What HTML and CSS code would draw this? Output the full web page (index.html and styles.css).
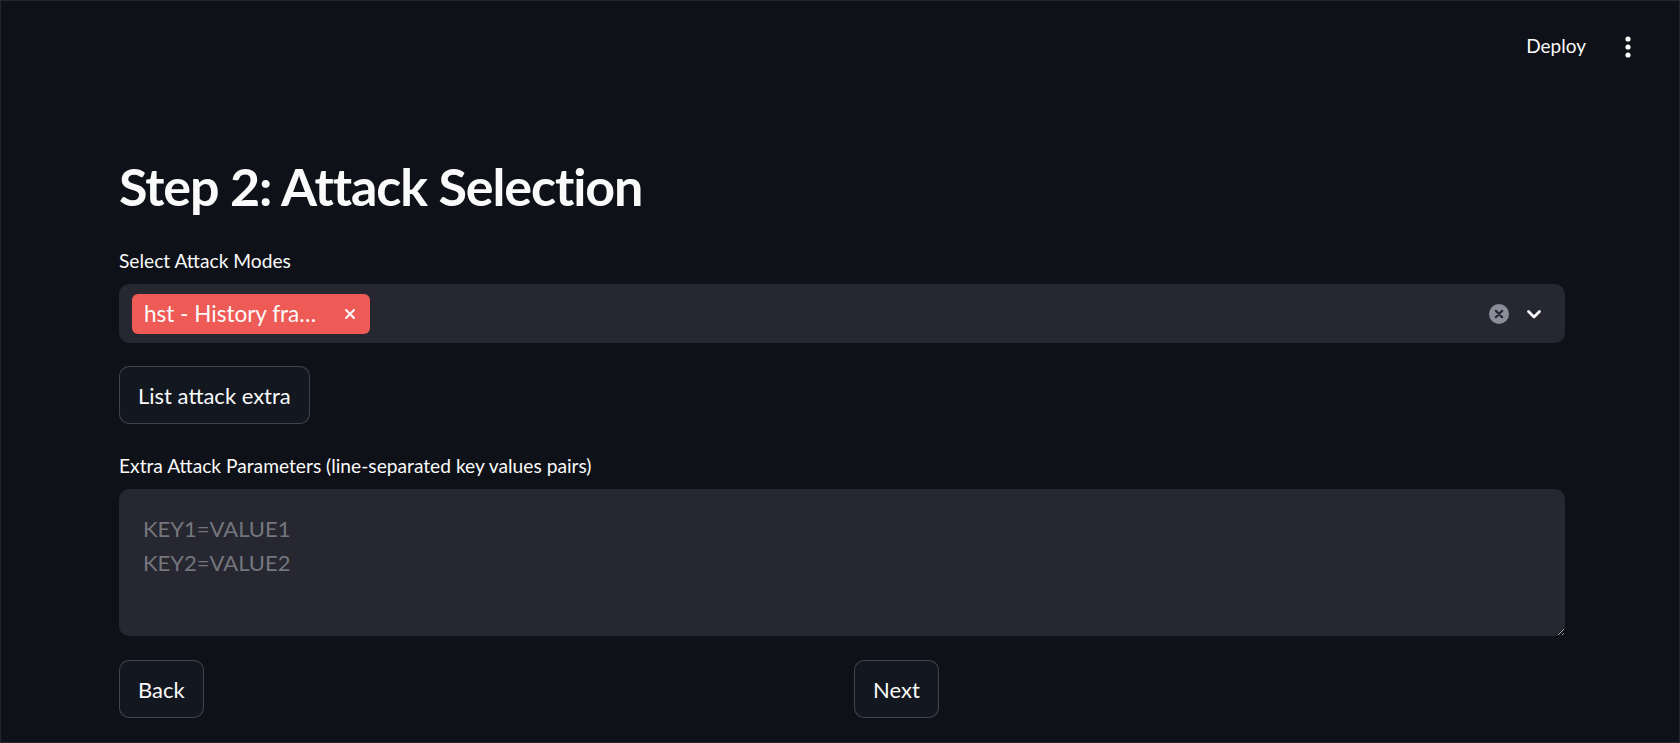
FILE: index.html
```html
<!DOCTYPE html>
<html lang="en">
<head>
<meta charset="utf-8">
<title>Step 2: Attack Selection</title>
<link rel="stylesheet" href="styles.css">
</head>
<body>
<div class="app">
  <header class="topbar">
    <span class="deploy">Deploy</span>
    <span class="kebab" aria-label="Main menu">
      <svg width="8" height="22" viewBox="0 0 8 22"><circle cx="4" cy="3" r="2.6" fill="#fafafa"/><circle cx="4" cy="11" r="2.6" fill="#fafafa"/><circle cx="4" cy="19" r="2.6" fill="#fafafa"/></svg>
    </span>
  </header>
  <main class="main">
    <h1 class="title">Step 2: Attack Selection</h1>

    <label class="label">Select Attack Modes</label>
    <div class="select">
      <div class="tags">
        <span class="tag">
          <span class="tag-text">hst - History fra…</span>
          <svg class="tag-x" width="12" height="12" viewBox="0 0 12 12"><path d="M2 2 L10 10 M10 2 L2 10" stroke="#fff" stroke-width="2" stroke-linecap="round"/></svg>
        </span>
      </div>
      <div class="select-icons">
        <svg width="20" height="20" viewBox="0 0 20 20"><circle cx="10" cy="10" r="10" fill="#8b8d9b"/><path d="M6.8 6.8 L13.2 13.2 M13.2 6.8 L6.8 13.2" stroke="#262730" stroke-width="2.2" stroke-linecap="round"/></svg>
        <svg width="18" height="18" viewBox="0 0 18 18"><path d="M3.5 6.5 L9 12 L14.5 6.5" fill="none" stroke="#fafafa" stroke-width="2.8" stroke-linecap="round" stroke-linejoin="round"/></svg>
      </div>
    </div>

    <div class="btn-row">
      <button class="btn">List attack extra</button>
    </div>

    <label class="label label2">Extra Attack Parameters (line-separated key values pairs)</label>
    <textarea class="textarea" placeholder="KEY1=VALUE1&#10;KEY2=VALUE2"></textarea>

    <div class="cols">
      <div class="col"><button class="btn">Back</button></div>
      <div class="col"><button class="btn">Next</button></div>
    </div>
  </main>
</div>
</body>
</html>
```
FILE: styles.css
```css
* { box-sizing: border-box; }
html, body {
  margin: 0;
  padding: 0;
  background: #0e1117;
  color: #fafafa;
  font-family: "Lato", "Open Sans", sans-serif;
}
.app {
  width: 1680px;
  height: 743px;
  border: 1px solid #23262d;
  overflow: hidden;
  color-scheme: dark;
}
.topbar {
  height: 92px;
  display: flex;
  align-items: flex-start;
  justify-content: flex-end;
  padding: 33px 47px 0 0;
  gap: 38px;
}
.deploy {
  font-size: 19px;
  font-weight: 400;
  line-height: 26px;
  margin-top: -1px;
}
.kebab { display: flex; padding-top: 2px; }
.main {
  width: 1446px;
  margin-left: 118px;
  display: flex;
  flex-direction: column;
}
.title {
  margin: 60px 0 0 0;
  font-size: 52px;
  font-weight: 700;
  line-height: 66px;
  letter-spacing: -1.1px;
}
.label {
  margin-top: 30px;
  font-size: 19.2px;
  line-height: 24px;
  height: 24px;
}
.select {
  margin-top: 11px;
  height: 59px;
  background: #262730;
  border-radius: 10px;
  display: flex;
  align-items: center;
  justify-content: space-between;
  padding: 0 22px 0 13px;
}
.tags { display: flex; }
.tag {
  display: flex;
  align-items: center;
  justify-content: space-between;
  width: 238px;
  height: 40px;
  background: #ee5b56;
  border-radius: 6px;
  padding: 0 12px 0 12px;
  font-size: 22.5px;
}
.tag-x { margin-right: 2px; }
.select-icons {
  display: flex;
  align-items: center;
  gap: 16px;
}
.btn-row { margin-top: 23px; }
.btn {
  font-family: inherit;
  font-size: 22px;
  color: #fafafa;
  background: #131720;
  border: 1px solid rgba(250, 250, 250, 0.2);
  border-radius: 10px;
  height: 58px;
  padding: 0 18px;
  cursor: pointer;
}
.label2 { margin-top: 30px; }
.textarea {
  margin-top: 11px;
  height: 147px;
  width: 100%;
  background: #262730;
  border: none;
  border-radius: 10px;
  padding: 23px 24px;
  font-family: inherit;
  font-size: 22px;
  line-height: 34px;
  color: #fafafa;
  resize: vertical;
  outline: none;
}
.textarea::placeholder { color: #75767d; }
.cols {
  margin-top: 24px;
  display: grid;
  grid-template-columns: 1fr 1fr;
  gap: 24px;
}
```
